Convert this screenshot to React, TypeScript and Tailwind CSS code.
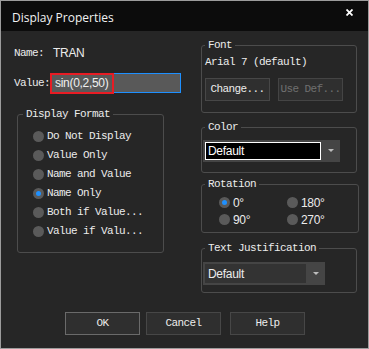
import type { ReactNode } from 'react';

const MONO = "font-['Liberation_Mono',monospace] text-[11px] tracking-[-0.6px]";
const SANS = "font-['Liberation_Sans',Arial,sans-serif] text-[12px] tracking-[-0.3px]";

function Group({ title, className, children }: { title: string; className: string; children: ReactNode }) {
  return (
    <fieldset className={`border border-[#4c4c4c] rounded-[3px] ${className}`}>
      <legend className={`${MONO} px-[3px] leading-[14px] text-[#ececec]`}>{title}</legend>
      {children}
    </fieldset>
  );
}

function Radio({ label, checked = false, mono = true }: { label: string; checked?: boolean; mono?: boolean }) {
  return (
    <div className="flex items-center">
      <span className="w-[11px] h-[11px] rounded-full bg-[#5a5a5a] flex items-center justify-center shrink-0">
        {checked && <span className="w-[5px] h-[5px] rounded-full bg-[#1e90ff]" />}
      </span>
      <span className={`ml-[3px] text-[#ececec] ${mono ? MONO : SANS}`}>{label}</span>
    </div>
  );
}

function Arrow() {
  return (
    <svg width="6" height="4" viewBox="0 0 6 4">
      <path d="M0 0 L6 0 L3 3 Z" fill="#bdbdbd" />
    </svg>
  );
}

function Btn({ children, className = '', disabled = false }: { children: ReactNode; className?: string; disabled?: boolean }) {
  return (
    <button
      className={`h-[23px] bg-[#2f2f2f] border flex items-center justify-center ${MONO} ${
        disabled ? 'text-[#6f6f6f] border-[#444]' : 'text-[#ececec] border-[#474747]'
      } ${className}`}
    >
      {children}
    </button>
  );
}

export default function App() {
  return (
    <div className="w-[369px] h-[349px] border border-[#9c9c9c] bg-[#262626] flex flex-col overflow-hidden">
      {/* title bar */}
      <div className="h-[30px] bg-[#0c0c0c] flex justify-between shrink-0">
        <span className="pl-[11px] pt-[8px] font-['Open_Sans',sans-serif] text-[12px] text-[#f2f2f2]">Display Properties</span>
        <svg className="mt-[8px] mr-[15px]" width="7" height="7" viewBox="0 0 7 7">
          <path d="M0.5 0.5 L6.5 6.5 M6.5 0.5 L0.5 6.5" stroke="#ffffff" strokeWidth="1.8" />
        </svg>
      </div>

      <div className="flex h-[270px]">
        {/* left column */}
        <div className="w-[200px] pl-[13px] flex flex-col">
          <div className="mt-[14px] h-[16px] flex items-center">
            <span className={`w-[39px] text-[#ececec] ${MONO}`}>Name:</span>
            <span className={`text-[#ececec] ${SANS}`}>TRAN</span>
          </div>
          <div className="mt-[12px] h-[20px] flex items-center">
            <span className={`w-[36px] text-[#ececec] ${MONO}`}>Value:</span>
            <div className="relative w-[131px] h-[20px] bg-[#595959] border border-[#1e90ff] flex items-center">
              <span className={`pl-[4px] text-[#f0f0f0] ${SANS}`}>sin(0,2,50)</span>
              <div className="absolute -left-px -top-px w-[64px] h-[21px] border-2 border-[#e81c24]" />
            </div>
          </div>
          <Group title="Display Format" className="ml-[3px] mt-[14px] w-[147px] h-[146px] px-[5px]">
            <div className="mt-[6px] ml-[10px] flex flex-col [&>*]:h-[19px]">
              <Radio label="Do Not Display" />
              <Radio label="Value Only" />
              <Radio label="Name and Value" />
              <Radio label="Name Only" checked />
              <Radio label="Both if Value..." />
              <Radio label="Value if Valu..." />
            </div>
          </Group>
        </div>

        {/* right column */}
        <div className="w-[156px] pt-[7px] flex flex-col">
          <Group title="Font" className="h-[75px] px-[3px]">
            <div className={`mt-[3px] h-[14px] leading-[14px] text-[#ececec] ${MONO}`}>Arial 7 (default)</div>
            <div className="mt-[9px] flex">
              <Btn className="w-[65px]">Change...</Btn>
              <Btn className="w-[65px] ml-[8px]" disabled>Use Def...</Btn>
            </div>
          </Group>

          <Group title="Color" className="mt-[7px] h-[53px] px-[3px]">
            <div className="-ml-[2px] mt-[6px] w-[137px] h-[22px] bg-[#454545] flex items-center pl-[2px]">
              <div className={`w-[116px] h-[18px] bg-black border border-white flex items-center pl-[2px] text-white ${SANS}`}>
                Default
              </div>
              <div className="flex-1 flex justify-center">
                <Arrow />
              </div>
            </div>
          </Group>

          <Group title="Rotation" className="mt-[4px] h-[56px] px-[3px]">
            <div className="mt-[3px] ml-[14px] grid grid-cols-[68px_68px] auto-rows-[17px]">
              <Radio label="0°" checked mono={false} />
              <Radio label="180°" mono={false} />
              <Radio label="90°" mono={false} />
              <Radio label="270°" mono={false} />
            </div>
          </Group>

          <Group title="Text Justification" className="mt-[8px] h-[52px] px-[3px]">
            <div className="-ml-[2px] mt-[7px] w-[122px] h-[23px] bg-[#454545] flex items-center pl-[2px]">
              <div className={`w-[101px] h-[19px] bg-[#333333] flex items-center pl-[3px] text-[#ececec] ${SANS}`}>
                Default
              </div>
              <div className="flex-1 flex justify-center">
                <Arrow />
              </div>
            </div>
          </Group>
        </div>
      </div>

      {/* buttons */}
      <div className="mt-[11px] flex pl-[64px]">
        <Btn className="w-[75px] !border-[#6a6a6a]">OK</Btn>
        <Btn className="w-[75px] ml-[6px]">Cancel</Btn>
        <Btn className="w-[75px] ml-[9px]">Help</Btn>
      </div>
    </div>
  );
}
